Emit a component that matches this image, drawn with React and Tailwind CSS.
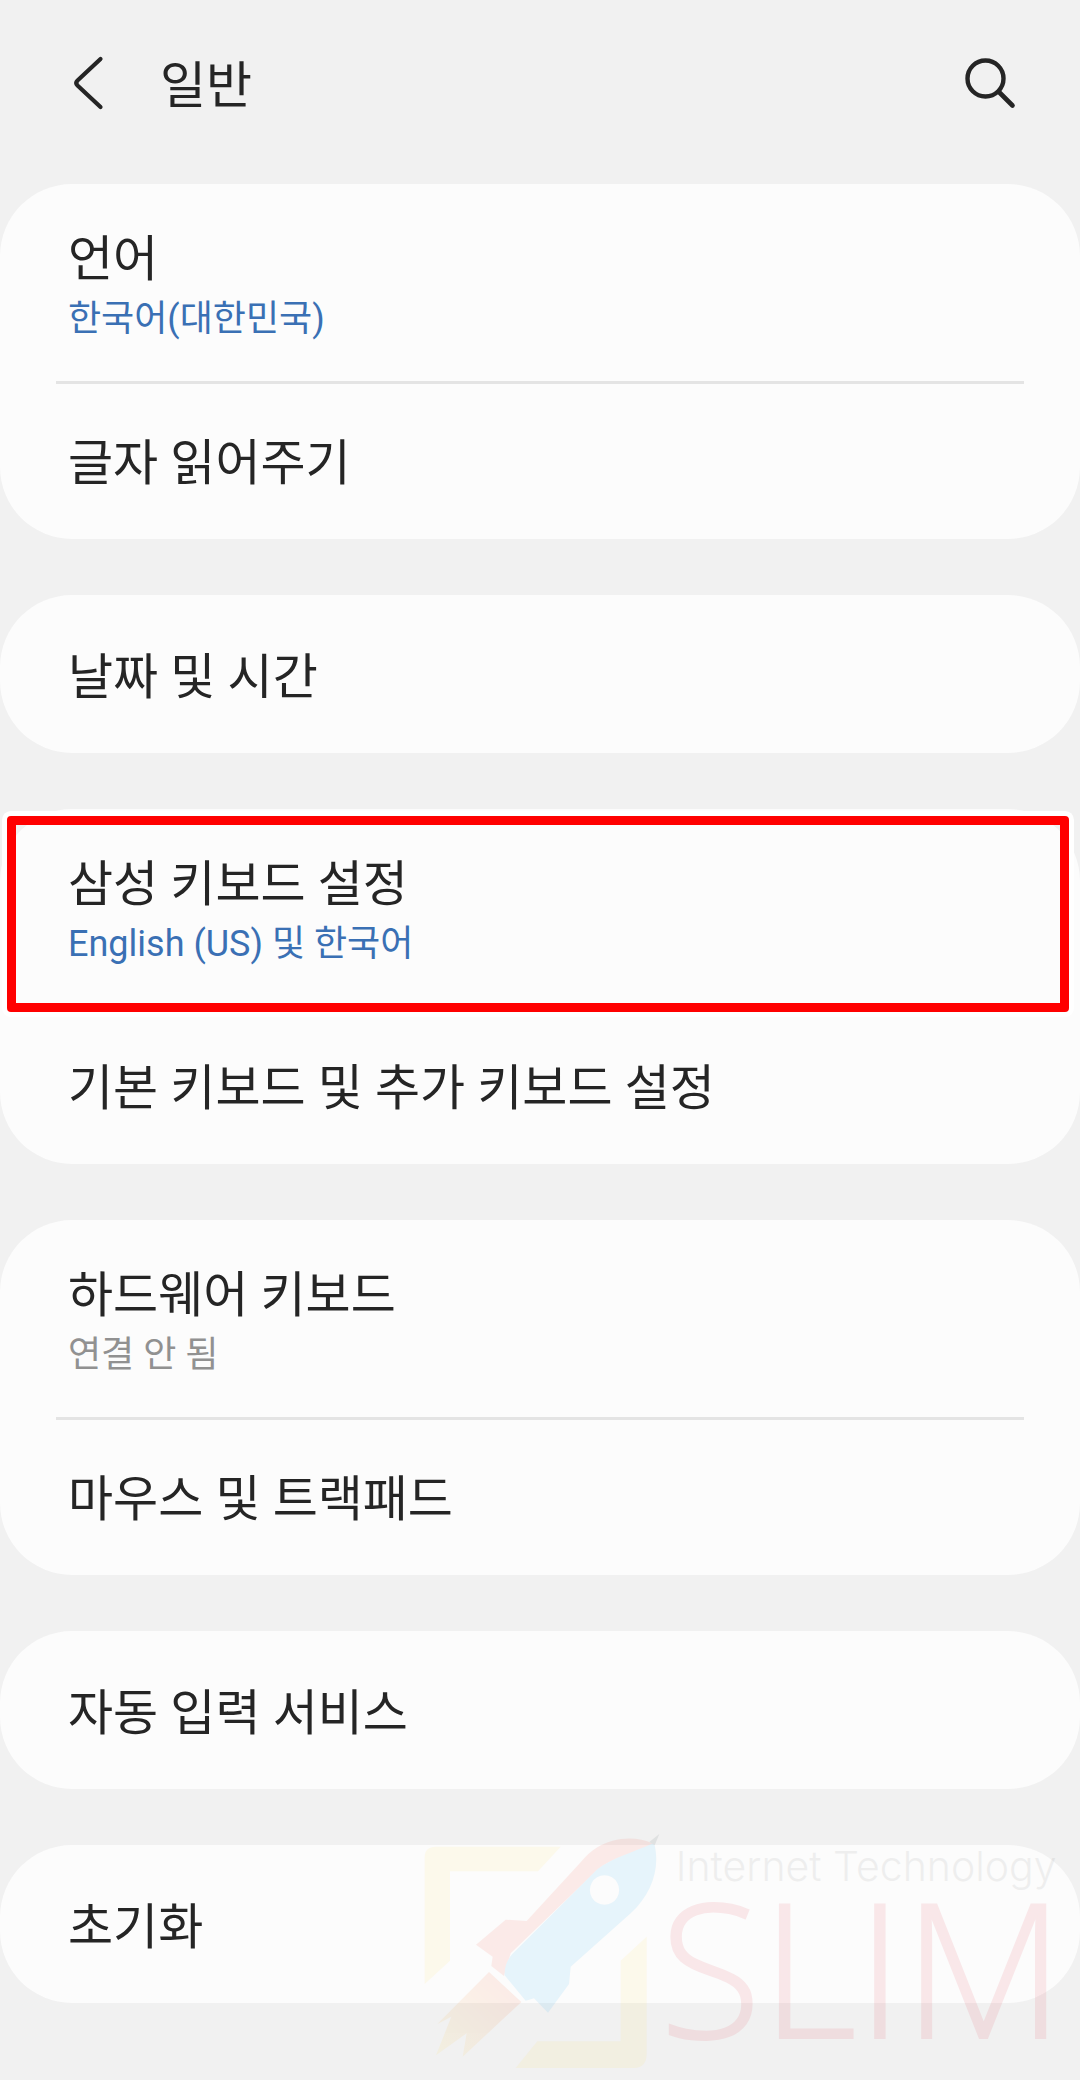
import React from "react";

const groups = [
  [
    { title: "언어", sub: "한국어(대한민국)", subColor: "text-[#3a70b4]" },
    { title: "글자 읽어주기" },
  ],
  [{ title: "날짜 및 시간" }],
  [
    {
      title: "삼성 키보드 설정",
      sub: "English (US) 및 한국어",
      subColor: "text-[#3a70b4]",
      marked: true,
    },
    { title: "기본 키보드 및 추가 키보드 설정" },
  ],
  [
    { title: "하드웨어 키보드", sub: "연결 안 됨", subColor: "text-[#919191]" },
    { title: "마우스 및 트랙패드" },
  ],
  [{ title: "자동 입력 서비스" }],
  [{ title: "초기화" }],
];

function Header() {
  return (
    <header className="flex items-center h-[168px] mb-4 px-16">
      <button type="button" aria-label="뒤로" className="w-12 h-16">
        <svg viewBox="0 0 48 64" className="w-12 h-16" fill="none">
          <path
            d="M36.5 7 L13.5 28.5 Q11 31 13.5 33.5 L36.5 55"
            stroke="#252525"
            strokeWidth="4.2"
            strokeLinecap="round"
            strokeLinejoin="round"
          />
        </svg>
      </button>
      <h1 className="ml-12 pt-1 text-[50px] leading-[64px] text-[#252525]">
        일반
      </h1>
      <button type="button" aria-label="검색" className="ml-auto w-14 h-14">
        <svg viewBox="0 0 56 56" className="w-14 h-14" fill="none">
          <circle cx="25.5" cy="22.5" r="18" stroke="#252525" strokeWidth="4.4" />
          <path
            d="M39 36 L52.5 49.5"
            stroke="#252525"
            strokeWidth="4.6"
            strokeLinecap="round"
          />
        </svg>
      </button>
    </header>
  );
}

function Row({ row }) {
  return (
    <a
      href="#"
      className={
        row.sub
          ? "relative block px-17 pt-11 pb-[34px]"
          : "relative block px-17 pt-[51px] pb-[43px]"
      }
    >
      <span className="block text-[49px] leading-[64px] text-[#252525]">
        {row.title}
      </span>
      {row.sub && (
        <span className={`block text-[36px] leading-[55px] ${row.subColor}`}>
          {row.sub}
        </span>
      )}
      {row.marked && (
        <span className="absolute z-10 top-[7px] -bottom-[6px] left-[7px] right-[11px] rounded border-[9px] border-[#ff0000] shadow-[0_0_0_5px_#ffffff]" />
      )}
    </a>
  );
}

function Watermark() {
  return (
    <div
      aria-hidden="true"
      className="absolute z-20 bottom-0 right-4 flex items-start pointer-events-none"
    >
      <svg viewBox="60 30 720 750" className="w-[240px] h-[250px]">
        <defs>
          <linearGradient id="flame" x1="300" y1="500" x2="110" y2="700" gradientUnits="userSpaceOnUse">
            <stop offset="0" stopColor="#f4511e" />
            <stop offset="1" stopColor="#fdd835" />
          </linearGradient>
        </defs>
        <g opacity="0.09">
          <path
            d="M62 492 V112 Q62 80 96 80 H470 L402 154 H138 V422 Z"
            fill="#fddc4a"
          />
          <path
            d="M728 350 V700 Q728 744 690 744 H335 L400 664 H650 V422 Z"
            fill="#fddc4a"
          />
          <path
            d="M745 70 C700 48 630 50 580 82 C560 94 545 110 530 127 L368 303 L305 299 L216 374 L266 410 L262 438 L300 468 L320 400 L580 150 C620 115 690 100 740 76 Z"
            fill="#f9452f"
          />
          <path
            d="M750 68 C690 96 620 115 580 148 L325 402 Q300 430 302 466 L365 542 L390 535 L432 578 L495 492 L500 440 L680 280 C745 220 770 140 750 68 Z M602 166 A44 44 0 1 1 601 166 Z"
            fill="#12a8f5"
            fillRule="evenodd"
          />
          <path d="M736 66 L766 42 L752 76 Z" fill="#37474f" />
          <path
            d="M255 456 L352 546 L176 710 L188 640 L96 706 L142 590 L100 612 Z"
            fill="url(#flame)"
          />
        </g>
      </svg>
      <div className="-ml-1 pt-4">
        <p className="pl-4 font-['Inter'] font-light text-[41px] leading-[40px] text-black opacity-5">
          Internet Technology
        </p>
        <p className="font-['Open_Sans'] font-light text-[186px] leading-[160px] text-[#e01e32] [-webkit-text-stroke:2px_#e01e32] opacity-9">
          SLIM
        </p>
      </div>
    </div>
  );
}

export default function App() {
  return (
    <div className="relative min-h-screen overflow-hidden bg-[#f1f1f1] pb-[77px] font-[Roboto,'Noto_Sans_CJK_KR',sans-serif]">
      <Header />
      <main className="flex flex-col gap-14">
        {groups.map((rows, i) => (
          <section key={i} className="rounded-[72px] bg-[#fcfcfc]">
            {rows.map((row, j) => (
              <React.Fragment key={row.title}>
                {j > 0 && <hr className="mx-14 -mb-[3px] border-t-[3px] border-[#e4e4e4]" />}
                <Row row={row} />
              </React.Fragment>
            ))}
          </section>
        ))}
      </main>
      <Watermark />
    </div>
  );
}
